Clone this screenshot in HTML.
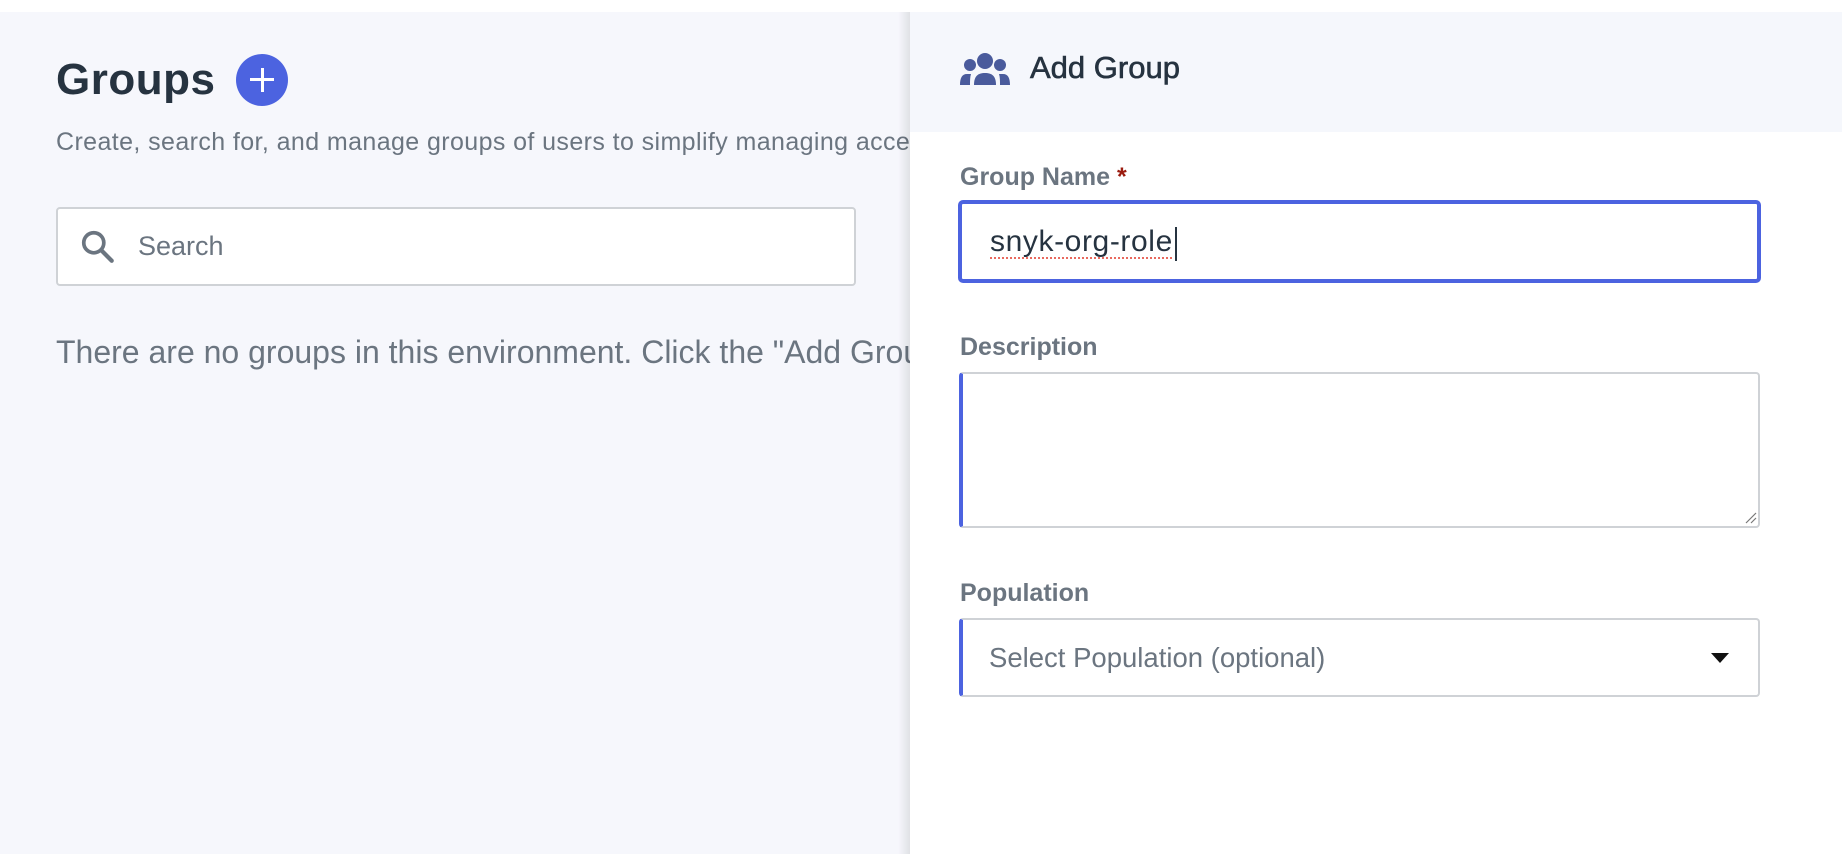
<!DOCTYPE html>
<html><head><meta charset="utf-8"><style>
*{margin:0;padding:0;box-sizing:border-box}
body{width:1842px;height:854px;overflow:hidden;background:#fff;font-family:"Liberation Sans",Arial,sans-serif;position:relative}
.left{position:absolute;left:0;top:12px;width:910px;height:842px;background:#f6f7fc}
.abs{position:absolute;white-space:nowrap}
.shadow{position:absolute;left:898px;top:12px;width:12px;height:842px;background:linear-gradient(to right,rgba(0,0,0,0),rgba(0,0,0,0.09))}
.panel{position:absolute;left:910px;top:12px;width:932px;height:842px;background:#fff}
.phead{position:absolute;left:0;top:0;width:932px;height:120px;background:#f5f7fc}
.lbl{color:#6b7580;font-size:25px;font-weight:bold}
.box{position:absolute;left:959px;width:801px;background:#fff;border:2px solid #cfd2d6;border-left:4px solid #4c63e0;border-radius:4px}
</style></head><body>
<div class="left"></div>
<div class="abs" style="left:56px;top:55px;font-size:44px;font-weight:bold;color:#263340;letter-spacing:0.5px">Groups</div>
<div class="abs" style="left:236px;top:54px;width:52px;height:52px;border-radius:50%;background:#4c63e0"></div>
<div class="abs" style="left:250px;top:78px;width:24px;height:3px;background:#fff"></div>
<div class="abs" style="left:260.5px;top:68px;width:3px;height:24px;background:#fff"></div>
<div class="abs" style="left:56px;top:128px;font-size:25px;color:#6b7580;letter-spacing:0.4px">Create, search for, and manage groups of users to simplify managing access</div>
<div class="abs" style="left:56px;top:207px;width:800px;height:79px;background:#fff;border:2px solid #cfd2d6;border-radius:4px"></div>
<svg class="abs" style="left:79px;top:228px" width="38" height="38" viewBox="0 0 36 36"><circle cx="14" cy="14" r="9.5" fill="none" stroke="#6b7580" stroke-width="3.5"/><path d="M21 21 L31 31" stroke="#6b7580" stroke-width="4" stroke-linecap="round"/></svg>
<div class="abs" style="left:138px;top:231px;font-size:27px;color:#6b7580">Search</div>
<div class="abs" style="left:56px;top:334px;font-size:32px;color:#6b7580">There are no groups in this environment. Click the "Add Group" button to create one.</div>
<div class="shadow"></div>
<div class="panel"><div class="phead"></div></div>
<svg class="abs" style="left:958px;top:52px" width="54" height="36" viewBox="0 0 52 36"><circle cx="26" cy="9" r="8" fill="#4a5b9c"/><circle cx="11" cy="13" r="6" fill="#4a5b9c"/><circle cx="41" cy="13" r="6" fill="#4a5b9c"/><path d="M15 33 C15 24 19 21 26 21 C33 21 37 24 37 33 Z" fill="#4a5b9c"/><path d="M1 33 C1 26 3 22 8 22 L12 22 C11 25 11 29 11 33 Z" fill="#4a5b9c"/><path d="M51 33 C51 26 49 22 44 22 L40 22 C41 25 41 29 41 33 Z" fill="#4a5b9c"/></svg>
<div class="abs" style="left:1030px;top:50px;font-size:31px;color:#263340;-webkit-text-stroke:0.6px #263340">Add Group</div>
<div class="abs lbl" style="left:960px;top:163px">Group Name <span style="color:#9b1c10">*</span></div>
<div class="abs" style="left:958px;top:200px;width:803px;height:83px;border:4px solid #4c63e0;border-radius:5px;background:#fff"></div>
<div class="abs" style="left:990px;top:225px;font-size:30px;color:#263340;letter-spacing:0.6px;text-decoration:underline dotted #e96a5f;text-underline-offset:6px;text-decoration-thickness:2px">snyk-org-role</div>
<div class="abs" style="left:1175px;top:227px;width:2px;height:34px;background:#263340"></div>
<div class="abs lbl" style="left:960px;top:333px">Description</div>
<div class="box" style="top:372px;height:156px"></div>
<svg class="abs" style="left:1745px;top:512px" width="12" height="12" viewBox="0 0 12 12"><path d="M1 11 L11 1 M6 11 L11 6" stroke="#777" stroke-width="1.2"/></svg>
<div class="abs lbl" style="left:960px;top:579px">Population</div>
<div class="box" style="top:618px;height:79px"></div>
<div class="abs" style="left:989px;top:642px;font-size:27.5px;color:#6b7580">Select Population (optional)</div>
<svg class="abs" style="left:1710px;top:652px" width="20" height="12" viewBox="0 0 20 12"><path d="M1 1 L19 1 L10 11 Z" fill="#111"/></svg>
</body></html>
